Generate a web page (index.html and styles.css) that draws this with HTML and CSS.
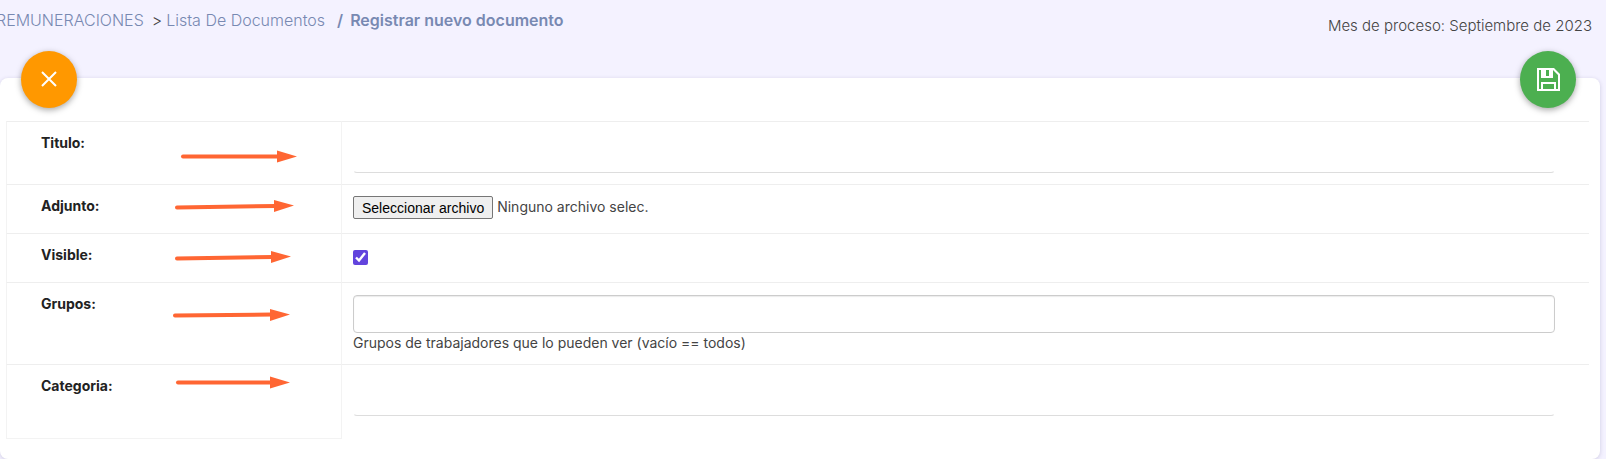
FILE: index.html
```html
<!DOCTYPE html>
<html lang="es">
<head>
    <title>Registrar nuevo documento</title>
    <meta charset="utf-8">
    <link rel="stylesheet" href="styles.css">
</head>
<body>
<div class="header">
    <nav class="breadcrumb">
        <a href="#">REMUNERACIONES</a>
        <span class="sep">&gt;</span>
        <a href="#">Lista De Documentos</a>
        <strong class="current"><span class="slash">/</span>Registrar nuevo documento</strong>
    </nav>
    <div class="period">Mes de proceso: Septiembre de 2023</div>
</div>

<form class="card">
    <div class="actions">
        <button type="button" class="fab cancel" aria-label="Cancelar">
            <svg width="24" height="24" viewBox="0 0 24 24"><path d="M5 4L19 18M19 4L5 18"/></svg>
        </button>
        <button type="submit" class="fab save" aria-label="Guardar">
            <svg width="24" height="24" viewBox="0 0 24 24"><path fill-rule="evenodd" d="M1 0H18L24 6V23H1ZM3 2V21H5V14H20V21H22V7L17 2V10H5V2ZM10 2V8H13V2ZM7 16V21H18V16Z"/></svg>
        </button>
    </div>

    <div class="fields">
        <div class="row tall">
            <label for="titulo">Titulo:</label>
            <div class="control"><input id="titulo" class="line" type="text"></div>
        </div>
        <div class="row">
            <label for="adjunto">Adjunto:</label>
            <div class="control file">
                <input id="adjunto" type="file">
                <button type="button" id="pick">Seleccionar archivo</button>
                <span id="file-name">Ninguno archivo selec.</span>
            </div>
        </div>
        <div class="row">
            <label for="visible">Visible:</label>
            <div class="control"><input id="visible" type="checkbox" checked></div>
        </div>
        <div class="row">
            <label for="grupos">Grupos:</label>
            <div class="control">
                <input id="grupos" class="box" type="text">
                <div class="help">Grupos de trabajadores que lo pueden ver (vacío == todos)</div>
            </div>
        </div>
        <div class="row last">
            <label for="categoria">Categoria:</label>
            <div class="control"><input id="categoria" class="line" type="text"></div>
        </div>

        <svg class="arrows" width="335" height="318" viewBox="0 0 335 318">
            <g class="shafts">
                <path d="M177 35.500H273"/>
                <path d="M171 86.500L270 85"/>
                <path d="M171 137.500L267 136"/>
                <path d="M169 194.500L266 193.500"/>
                <path d="M172 261.500H266"/>
            </g>
            <g class="heads">
                <path d="M271 29.500L291 35.500L271 41.500z"/>
                <path d="M268 79L288 84.500L268 91z"/>
                <path d="M265 130L285 135.500L265 142z"/>
                <path d="M264 188L284 193.500L264 200z"/>
                <path d="M264 255.500L284 261.500L264 267.500z"/>
            </g>
        </svg>
    </div>
</form>

<script type="text/javascript">
var fileInput = document.getElementById('adjunto');

document.getElementById('pick').addEventListener('click', function() {
    fileInput.click();
}, false);

fileInput.addEventListener('change', function() {
    var file = fileInput.files[0];
    document.getElementById('file-name').textContent = file ? file.name : 'Ninguno archivo selec.';
}, false);
</script>
</body>
</html>
```
FILE: styles.css
```css
* {
    box-sizing: border-box;
}

body {
    font: 14px/20px Inter, "Liberation Sans", sans-serif;
    color: #444;
    background-color: #f4f2ff;
    margin: 0;
    overflow-x: hidden;
}

.header {
    display: flex;
    justify-content: space-between;
    height: 78px;
    padding: 8px 14px 0 0;
}

.breadcrumb {
    display: flex;
    gap: 4px;
    margin-left: -4px;
    font-size: 16px;
    font-weight: 300;
    line-height: 24px;
}

.breadcrumb a,
.breadcrumb .current {
    color: #7889b2;
    text-decoration: none;
}

.breadcrumb .sep {
    margin-left: 4px;
}

.breadcrumb .current {
    margin-left: 8px;
    font-weight: 600;
}

.breadcrumb .slash {
    margin-right: 7px;
}

.period {
    padding-top: 8px;
    font-size: 15px;
    font-weight: 300;
    color: #444;
}

.card {
    position: relative;
    margin-right: 6px;
    padding: 43px 11px 20px 6px;
    background: #fff;
    border-radius: 8px;
    box-shadow: 0 1px 4px rgba(60, 50, 110, 0.2);
}

/* round buttons straddling the top edge of the card */
.actions {
    position: absolute;
    top: -27px;
    left: 21px;
    right: 24px;
    display: flex;
    justify-content: space-between;
}

.fab {
    display: flex;
    align-items: center;
    justify-content: center;
    width: 56px;
    height: 57px;
    padding: 0;
    border: none;
    border-radius: 50%;
    box-shadow: 0 2px 6px rgba(0, 0, 0, 0.35);
    cursor: pointer;
}

.fab svg {
    fill: #fff;
}

.cancel {
    background: #ff9800;
}

.cancel svg {
    stroke: #fff;
    stroke-width: 2;
}

.save {
    background: #4caf50;
}

.fields {
    position: relative;
}

.row {
    display: grid;
    grid-template-columns: 336px 1fr;
    min-height: 49px;
}

.row label {
    padding: 11px 34px;
    border: 1px solid #f3f3f3;
    border-top-color: #eee;
    border-bottom: none;
    font-weight: 700;
    color: #222;
}

.row.tall {
    min-height: 63px;
}

.row.last {
    min-height: 75px;
}

.row.last label {
    border-bottom: 1px solid #f3f3f3;
}

.control {
    padding: 12px 34px 11px 11px;
    border-top: 1px solid #eee;
}

.line,
.box {
    display: block;
    width: 100%;
    height: 38px;
    padding: 6px 12px;
    border: 1px solid #ccc;
    border-radius: 4px;
    font: inherit;
    background: #fff;
}

.line {
    height: 39px;
    border-color: transparent transparent #ddd;
}

.box {
    box-shadow: inset 0 1px 1px rgba(0, 0, 0, 0.08);
}

.file {
    display: flex;
    align-items: flex-start;
    gap: 4px;
    padding-top: 11px;
}

.file input {
    display: none;
}

.file button {
    height: 23px;
    padding: 0 8px;
    border: 1px solid #767676;
    border-radius: 2px;
    font: 14px/20px "Liberation Sans", Arial, sans-serif;
    color: #000;
    background: #efefef;
}

.file span {
    line-height: 22px;
}

#visible {
    display: block;
    width: 15px;
    height: 15px;
    margin: 4px 0 0;
    accent-color: #6244dd;
}

/* pointers drawn over the label column */
.arrows {
    position: absolute;
    top: 0;
    left: 0;
    pointer-events: none;
}

.shafts {
    fill: none;
    stroke: #ff6633;
    stroke-width: 4;
    stroke-linecap: round;
}

.heads {
    fill: #ff6633;
}
```
